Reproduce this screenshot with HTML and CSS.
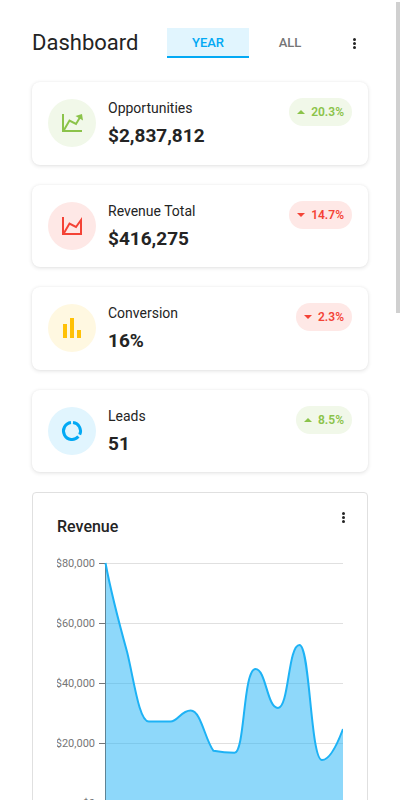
FILE: index.html
```html
<!DOCTYPE html>
<html lang="en">
<head>
<meta charset="utf-8">
<meta name="viewport" content="width=device-width, initial-scale=1">
<title>Dashboard</title>
<link rel="stylesheet" href="styles.css">
</head>
<body>
<main class="page">
  <header class="toolbar">
    <h1 class="title">Dashboard</h1>
    <div class="tabs" role="tablist">
      <button class="tab tab-active" role="tab" aria-selected="true">Year</button>
      <button class="tab" role="tab" aria-selected="false">All</button>
    </div>
    <button class="menu" aria-label="More actions">
      <svg class="dots" viewBox="0 0 4 12"><circle cx="2.500" cy="2.500" r="1.500"/><circle cx="2.500" cy="6.500" r="1.500"/><circle cx="2.500" cy="10.500" r="1.500"/></svg>
    </button>
  </header>

  <section class="cards">
    <article class="card green">
      <span class="badge">
        <svg class="icon" viewBox="0 0 24 24"><path class="line" d="M3 3V20H22M4 19L9.500 9.500L16 13L20.500 5.500"/><path class="fill" d="M15.500 5L22 3L23 9.500Z"/></svg>
      </span>
      <div class="info"><h2 class="label">Opportunities</h2><p class="value">$2,837,812</p></div>
      <span class="chip"><svg class="arrow" viewBox="0 0 8 4"><path d="M0 4L4 0L8 4Z"/></svg>20.3%</span>
    </article>
    <article class="card red">
      <span class="badge">
        <svg class="icon" viewBox="0 0 24 24"><path class="line" d="M3 3V20H21V6L16 13L9.500 9.500L4 19"/></svg>
      </span>
      <div class="info"><h2 class="label">Revenue Total</h2><p class="value">$416,275</p></div>
      <span class="chip"><svg class="arrow" viewBox="0 0 8 4"><path d="M0 0H8L4 4Z"/></svg>14.7%</span>
    </article>
    <article class="card yellow">
      <span class="badge">
        <svg class="icon" viewBox="0 0 24 24"><path class="fill" d="M3 8H7V22H3ZM10 2H14V22H10ZM17 14H21V22H17Z"/></svg>
      </span>
      <div class="info"><h2 class="label">Conversion</h2><p class="value">16%</p></div>
      <span class="chip chip-down"><svg class="arrow" viewBox="0 0 8 4"><path d="M0 0H8L4 4Z"/></svg>2.3%</span>
    </article>
    <article class="card blue">
      <span class="badge">
        <svg class="icon" viewBox="0 0 24 24"><path class="ring" d="M13 3.560A8.500 8.500 0 0 1 19.700 15.600M18.400 17.600A8.500 8.500 0 1 1 11 3.560"/></svg>
      </span>
      <div class="info"><h2 class="label">Leads</h2><p class="value">51</p></div>
      <span class="chip chip-up"><svg class="arrow" viewBox="0 0 8 4"><path d="M0 4L4 0L8 4Z"/></svg>8.5%</span>
    </article>
  </section>

  <section class="panel">
    <div class="panel-head">
      <h2 class="panel-title">Revenue</h2>
      <button class="menu" aria-label="Chart actions">
        <svg class="dots" viewBox="0 0 4 12"><circle cx="2.500" cy="2.500" r="1.500"/><circle cx="2.500" cy="6.500" r="1.500"/><circle cx="2.500" cy="10.500" r="1.500"/></svg>
      </button>
    </div>
    <svg class="chart" viewBox="0 0 286 270" role="img" aria-label="Revenue area chart">
      <g transform="translate(-57 -553)">
        <path class="grid" d="M105 563.500H343M105 623.500H343M105 683.500H343M105 743.500H343M105 803.500H343"/>
        <path class="axis" d="M99 563.500H106M99 623.500H106M99 683.500H106M99 743.500H106M99 803.500H106M105.500 563V803"/>
        <path class="area" d="M105.500 563C110 587 121 630 127.100 652C134 680 139 721.500 148.800 721.500H170.400C178 721.500 181 710.500 190.700 710.500C201 710.500 205 740 213.500 750.800C220 752 226 752.800 234.500 752.800C245 752.800 243 669 255.500 669C266 669 267 708 278 708C289 708 288 645 299.500 645C310 645 310.500 760 322 760C330 760 337 745 343 729V803.500H105.500Z"/>
        <path class="curve" d="M105.500 563C110 587 121 630 127.100 652C134 680 139 721.500 148.800 721.500H170.400C178 721.500 181 710.500 190.700 710.500C201 710.500 205 740 213.500 750.800C220 752 226 752.800 234.500 752.800C245 752.800 243 669 255.500 669C266 669 267 708 278 708C289 708 288 645 299.500 645C310 645 310.500 760 322 760C330 760 337 745 343 729"/>
        <g class="ticks">
          <text x="95" y="567">$80,000</text>
          <text x="95" y="627">$60,000</text>
          <text x="95" y="687">$40,000</text>
          <text x="95" y="747">$20,000</text>
          <text x="95" y="807">$0</text>
        </g>
      </g>
    </svg>
  </section>
</main>
<div class="scroll-thumb"></div>
</body>
</html>
```
FILE: styles.css
```css
* { box-sizing: border-box; }
html { scrollbar-width: none; }
body {
  margin: 0;
  background: #fff;
  color: #242424;
  font-family: Roboto, "Liberation Sans", sans-serif;
}
h1, h2, p { margin: 0; }
button {
  border: 0;
  padding: 0;
  background: none;
  color: inherit;
  font-family: inherit;
}
.page { padding: 28px 32px; }

.toolbar {
  display: flex;
  align-items: center;
  margin-bottom: 24px;
}
.title {
  flex: 1;
  font-size: 22px;
  font-weight: 400;
  line-height: 30px;
}
.tabs { display: flex; margin-right: 9px; }
.tab {
  width: 82px;
  height: 30px;
  border-bottom: 2px solid transparent;
  color: #757575;
  font-size: 13px;
  font-weight: 500;
  text-transform: uppercase;
}
.tab-active {
  border-color: #03a9f4;
  background: #e1f5fe;
  color: #03a9f4;
}
.menu {
  display: flex;
  align-items: center;
  justify-content: center;
  width: 28px;
  height: 28px;
}
.dots { width: 4px; height: 12px; fill: #242424; }

.cards { display: grid; gap: 20px; }
.card {
  display: flex;
  align-items: center;
  gap: 12px;
  padding: 16px;
  border-radius: 8px;
  background: #fff;
  box-shadow: 0 0 2px rgba(0, 0, 0, 0.04), 0 1px 4px rgba(0, 0, 0, 0.12);
}
.badge {
  display: flex;
  align-items: center;
  justify-content: center;
  width: 48px;
  height: 48px;
  border-radius: 50%;
  background: var(--tint);
}
.icon { width: 24px; height: 24px; color: var(--tone); }
.line { fill: none; stroke: currentColor; stroke-width: 2; }
.ring { fill: none; stroke: currentColor; stroke-width: 3; }
.fill { fill: currentColor; }
.info { flex: 1; display: grid; gap: 6px; }
.label { font-size: 14px; font-weight: 400; line-height: 20px; }
.value { font-size: 19px; font-weight: 700; line-height: 1.29; }
.chip {
  display: flex;
  align-items: center;
  align-self: flex-start;
  gap: 6px;
  height: 28px;
  padding: 0 8px;
  border-radius: 14px;
  background: var(--tint);
  color: var(--tone);
  font-size: 12px;
  font-weight: 600;
}
.arrow { width: 8px; height: 4px; fill: currentColor; }
.green, .chip-up { --tone: #8bc34a; --tint: #f1f8e9; }
.red, .chip-down { --tone: #f44336; --tint: #fee8e6; }
.yellow { --tone: #ffc107; --tint: #fff8e1; }
.blue { --tone: #03a9f4; --tint: #e1f5fe; }

.panel {
  margin-top: 20px;
  padding: 10px 24px 24px;
  border: 1px solid #e0e0e0;
  border-radius: 4px;
}
.panel-head {
  display: flex;
  align-items: flex-start;
  justify-content: space-between;
  margin-right: -14px;
}
.panel-title {
  padding-top: 12px;
  font-size: 16px;
  font-weight: 500;
  line-height: 24px;
}
.chart { display: block; width: 100%; margin-top: 14px; }
.grid { stroke: #e0e0e0; }
.axis { stroke: #767676; }
.area { fill: #1db2f5; fill-opacity: 0.5; }
.curve { fill: none; stroke: #1db2f5; stroke-width: 2; }
.ticks { fill: #767676; font-size: 11px; text-anchor: end; }

.scroll-thumb {
  position: fixed;
  top: 2px;
  right: 0;
  width: 4px;
  height: 311px;
  background: #d0d0d0;
}
```
